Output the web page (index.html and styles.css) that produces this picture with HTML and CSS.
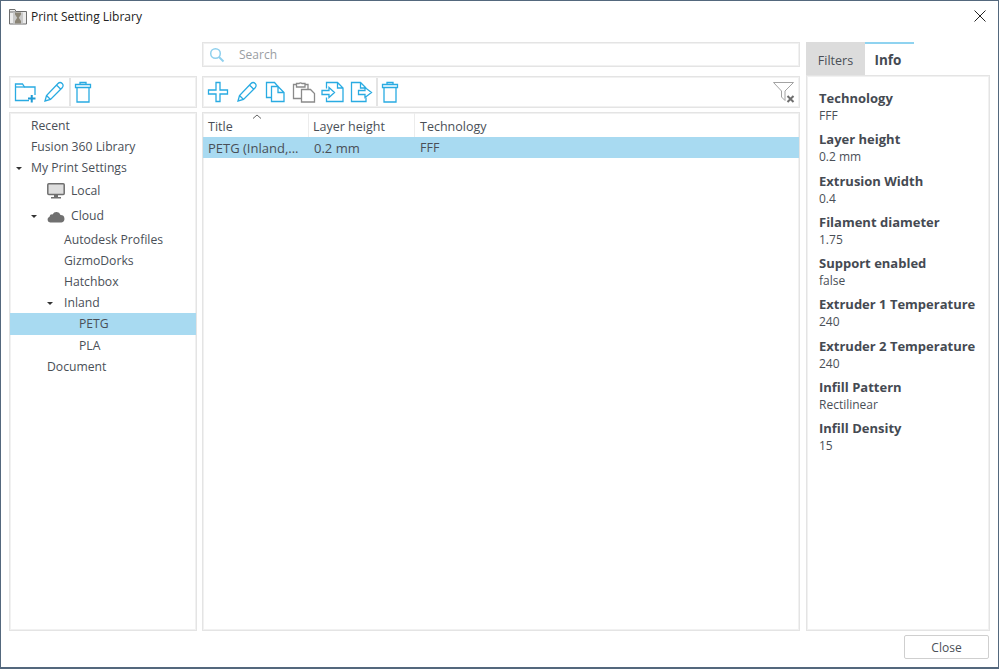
FILE: index.html
```html
<!DOCTYPE html>
<html lang="en">
<head>
<meta charset="utf-8">
<title>Print Setting Library</title>
<link rel="stylesheet" href="styles.css">
</head>
<body>
<div class="window">
  <header class="titlebar">
    <svg class="app-icon" width="18" height="17" viewBox="0 0 18 17">
      <path d="M.5 16V1.500h5.500l1 2h10.500V16z" fill="#ececec" stroke="#6e6e6e" stroke-width="1"/>
      <path d="M.5 4h6.500" stroke="#6e6e6e"/>
      <rect x="4" y="4.500" width="10" height="11" fill="#c9c9c9"/>
      <path d="M6 4.500h6v2L9.800 9.800 12 13v2.500H6V13l2.200-3.200L6 6.500z" fill="#8a8476"/>
    </svg>
    <span class="title">Print Setting Library</span>
    <svg class="close-x" width="12" height="12" viewBox="0 0 12 12"><path d="M.5.500l11 11M11.500.500l-11 11" stroke="#222" stroke-width="1" fill="none"/></svg>
  </header>

  <main class="main">
    <div class="search box">
      <svg width="16" height="16" viewBox="0 0 16 16"><circle cx="6.500" cy="6.500" r="4.800" fill="none" stroke="#8fd0ee" stroke-width="1.500"/><path d="M10 10l4.500 4.500" stroke="#8fd0ee" stroke-width="2"/></svg>
      <span>Search</span>
    </div>

    <aside class="side">
      <div class="tabs">
        <div class="tab">Filters</div>
        <div class="tab active">Info</div>
      </div>
      <div class="info box">
        <dl>
          <dt>Technology</dt><dd>FFF</dd>
          <dt>Layer height</dt><dd>0.2 mm</dd>
          <dt>Extrusion Width</dt><dd>0.4</dd>
          <dt>Filament diameter</dt><dd>1.75</dd>
          <dt>Support enabled</dt><dd>false</dd>
          <dt>Extruder 1 Temperature</dt><dd>240</dd>
          <dt>Extruder 2 Temperature</dt><dd>240</dd>
          <dt>Infill Pattern</dt><dd>Rectilinear</dd>
          <dt>Infill Density</dt><dd>15</dd>
        </dl>
      </div>
    </aside>

    <div class="toolbar tools-left box">
      <svg class="ico" width="24" height="24" viewBox="0 0 24 24"><g fill="none" stroke="#29abe2" stroke-width="1.300"><path d="M16 20.500H2.500V4h7l2 3h10.500v8"/><path d="M2.500 7h9"/></g><path d="M15 18.500h7.500M18.750 15v7.500" stroke="#1f9bd4" stroke-width="2"/></svg>
      <svg class="ico pencil-left" width="24" height="24" viewBox="0 0 24 24"><path d="M3 21l1.500-5.500L16 3.500c1.200-1.200 3-1.200 4.200 0s1.200 3 0 4.200L8.500 19.500zM14.500 5l4.500 4.500M4.500 15.500l4 4" fill="none" stroke="#29abe2" stroke-width="1.300"/></svg>
      <span class="sep"></span>
      <svg class="ico trash" width="20" height="24" viewBox="0 0 20 24"><path d="M7 4.500V2.500h6v2M2.500 4.500h15v3h-15zM4 7.500v14.500h12V7.500" fill="none" stroke="#29abe2" stroke-width="1.300"/></svg>
    </div>

    <div class="toolbar tools-main box">
      <svg class="ico" width="24" height="24" viewBox="0 0 24 24"><path d="M10 2.500h4v7.500h7.500v4H14v7.500h-4V14H2.500v-4H10z" fill="none" stroke="#29abe2" stroke-width="1.300"/></svg>
      <svg class="ico" width="24" height="24" viewBox="0 0 24 24"><path d="M3 21l1.500-5.500L16 3.500c1.200-1.200 3-1.200 4.200 0s1.200 3 0 4.200L8.500 19.500zM14.500 5l4.500 4.500M4.500 15.500l4 4" fill="none" stroke="#29abe2" stroke-width="1.300"/></svg>
      <svg class="ico" width="24" height="24" viewBox="0 0 24 24"><g fill="none" stroke="#29abe2" stroke-width="1.300"><path d="M8.500 17.500h-5V2.500h8l3.500 4"/><path d="M8.500 6.500H15l6 6v9H8.500zM15 6.500v6h6"/></g></svg>
      <svg class="ico" width="24" height="24" viewBox="0 0 24 24"><g fill="none" stroke="#8a8a8a" stroke-width="1.300"><path d="M9 18.500H1.500V4.500h3M13 4.500h3V9"/><path d="M4.500 3.500h2.500a2 2 0 0 1 3 0h3V7h-8.500z"/><path d="M9.500 9.500h9l4 4v8.500h-13z"/></g></svg>
      <svg class="ico" width="24" height="24" viewBox="0 0 24 24"><g fill="none" stroke="#29abe2" stroke-width="1.300"><path d="M6.500 8.500V2.500h11l5.500 5.500v13.500H6.500v-4M17.500 2.500V8H23"/><path d="M2 10.500h7V7.500l5.500 5-5.500 5v-3H2z"/></g></svg>
      <svg class="ico" width="24" height="24" viewBox="0 0 24 24"><g fill="none" stroke="#29abe2" stroke-width="1.300"><path d="M17 8l-5.500-5.500H2.500v19H17v-4M11.500 2.500V8H17"/><path d="M9.500 10.500H16V7.500l6.500 5-6.500 5v-3H9.500z"/></g></svg>
      <span class="sep"></span>
      <svg class="ico trash" width="20" height="24" viewBox="0 0 20 24"><path d="M7 4.500V2.500h6v2M2.500 4.500h15v3h-15zM4 7.500v14.500h12V7.500" fill="none" stroke="#29abe2" stroke-width="1.300"/></svg>
      <svg class="filter" width="24" height="24" viewBox="0 0 24 24"><path d="M1.500 2.500h20l-8.500 8.500v9.500l-3.500-3.500V11z" fill="none" stroke="#a3a3a3" stroke-width="1"/><path d="M15.500 16l6 6M21.500 16l-6 6" stroke="#6f6f6f" stroke-width="2"/></svg>
    </div>

    <nav class="tree box">
      <div class="row l0">Recent</div>
      <div class="row l0">Fusion 360 Library</div>
      <div class="row l0"><i class="caret"></i>My Print Settings</div>
      <div class="row l1 tall">
        <svg width="18" height="16" viewBox="0 0 18 16"><rect x=".8" y=".8" width="16.400" height="10.700" rx="1" fill="#dedede" stroke="#6f6f6f" stroke-width="1.500"/><path d="M7 12h4v2H7zM4 14h10v1.500H4z" fill="#6f6f6f"/></svg>
        Local
      </div>
      <div class="row l1 taller">
        <i class="caret"></i>
        <svg width="18" height="14" viewBox="0 0 18 14"><path d="M3.200 13.500A3 3 0 0 1 2.500 7.700 2.800 2.800 0 0 1 5.600 5.400 4.300 4.300 0 0 1 13.500 6 3.800 3.800 0 0 1 14.500 13.500z" fill="#707070"/></svg>
        Cloud
      </div>
      <div class="row l2">Autodesk Profiles</div>
      <div class="row l2">GizmoDorks</div>
      <div class="row l2">Hatchbox</div>
      <div class="row l2"><i class="caret"></i>Inland</div>
      <div class="row l3 selected">PETG</div>
      <div class="row l3">PLA</div>
      <div class="row l1">Document</div>
    </nav>

    <section class="table box">
      <div class="thead">
        <div class="c c1">Title<svg class="sort" width="10" height="5" viewBox="0 0 10 5"><path d="M1 4.500l4-3.500 4 3.500" fill="none" stroke="#666" stroke-width="1"/></svg></div>
        <div class="c c2">Layer height</div>
        <div class="c c3">Technology</div>
      </div>
      <div class="tr selected">
        <div class="c c1">PETG (Inland,...</div>
        <div class="c c2">0.2 mm</div>
        <div class="c c3">FFF</div>
      </div>
    </section>
  </main>

  <footer class="footer"><button class="close-btn" type="button">Close</button></footer>
</div>
</body>
</html>
```

FILE: styles.css
```css
* { box-sizing: border-box; }
html, body { margin: 0; padding: 0; height: 100%; }
body { font-family: "Open Sans", "Noto Sans", sans-serif; font-size: 12px; color: #4a4f57; background: #fff; overflow: hidden; }
.window { width: 999px; height: 669px; border: 1px solid #54687d; border-bottom-width: 2px; background: #fff; display: flex; flex-direction: column; }
.titlebar { height: 29px; flex: none; display: flex; align-items: center; padding: 1px 12px 0 8px; color: #222; }
.app-icon { margin-right: 4px; }
.title { flex: 1; font-size: 12px; }
.box { border: 1px solid #e4e4e4; box-shadow: inset 0 0 0 1px #f1f1f1; background: #fff; }
.main { flex: none; padding: 12px 8px 0; display: grid; grid-template-columns: 188px 598px 185px; grid-template-rows: 25px 9px 32px 4px 519px; column-gap: 5px; }
.search { grid-column: 2; grid-row: 1; display: flex; align-items: center; padding-left: 6px; gap: 14px; color: #9a9ea3; }
.side { grid-column: 3; grid-row: 1 / 6; margin-left: 1px; display: flex; flex-direction: column; }
.tabs { height: 33px; flex: none; display: flex; }
.tab { width: 59px; background: #dcdcdc; display: flex; align-items: center; justify-content: center; padding-top: 4px; font-size: 12.500px; }
.tab.active { width: 49px; background: #fff; border-top: 2px solid #8fd3f0; font-weight: 700; font-size: 13.500px; color: #454a52; padding: 0 3px 0 0; }
.info { flex: 1; padding: 14px 12px 0; }
dl { margin: 0; }
dt { font-weight: 700; font-size: 13px; line-height: 17px; color: #454a52; }
dd { margin: 0 0 7.300px; line-height: 17px; }
.toolbar { grid-row: 3; display: flex; align-items: center; padding-left: 3px; }
.tools-left { grid-column: 1; }
.tools-main { grid-column: 2; gap: 4.500px; }
.ico { flex: none; }
.pencil-left { margin-left: 5px; }
.sep { width: 2px; height: 28px; background: #e4e4e4; flex: none; }
.tools-left .sep { margin: 0 2px 0 3px; }
.tools-main .sep { margin: 0 -2.500px 0 -1px; }
.filter { margin-left: auto; margin-right: 3px; }
.tree { grid-column: 1; grid-row: 5; padding-top: 2px; }
.table { grid-column: 2; grid-row: 5; }
.row { height: 21.200px; display: flex; align-items: center; white-space: nowrap; position: relative; font-size: 12.200px; }
.row.tall { height: 24px; }
.row.taller { height: 26px; }
.row svg { margin-right: 6px; flex: none; }
.l0 { padding-left: 21px; }
.l1 { padding-left: 37px; }
.l2 { padding-left: 54px; }
.l3 { padding-left: 69px; }
.selected { background: #a8daf1; }
.caret { position: absolute; width: 0; height: 0; border-left: 3px solid transparent; border-right: 3px solid transparent; border-top: 3px solid #333; margin-top: 1px; }
.l0 .caret { left: 6px; }
.l1 .caret { left: 21px; }
.l2 .caret { left: 37px; }
.thead { height: 24px; display: flex; font-size: 12.500px; }
.thead .c { display: flex; align-items: flex-end; padding: 0 0 2px 4px; border-right: 1px solid #ececec; position: relative; }
.thead .c1 { padding-left: 5px; }
.thead .c3 { padding-left: 5px; }
.tr { height: 21px; display: flex; align-items: center; font-size: 13px; }
.tr .c { padding-left: 5px; }
.tr .c3 { font-size: 12.500px; }
.c1 { width: 106px; }
.c2 { width: 106px; }
.c3 { flex: 1; border-right: 0 !important; }
.sort { position: absolute; left: 49px; top: 1px; }
.footer { flex: none; display: flex; justify-content: flex-end; padding: 4px 9px 0 0; }
.close-btn { width: 85px; height: 24px; border: 1px solid #cfcfcf; border-radius: 2px; background: #fff; font: 12px "Open Sans", "Noto Sans", sans-serif; color: #4a4f57; padding: 0; }
```
